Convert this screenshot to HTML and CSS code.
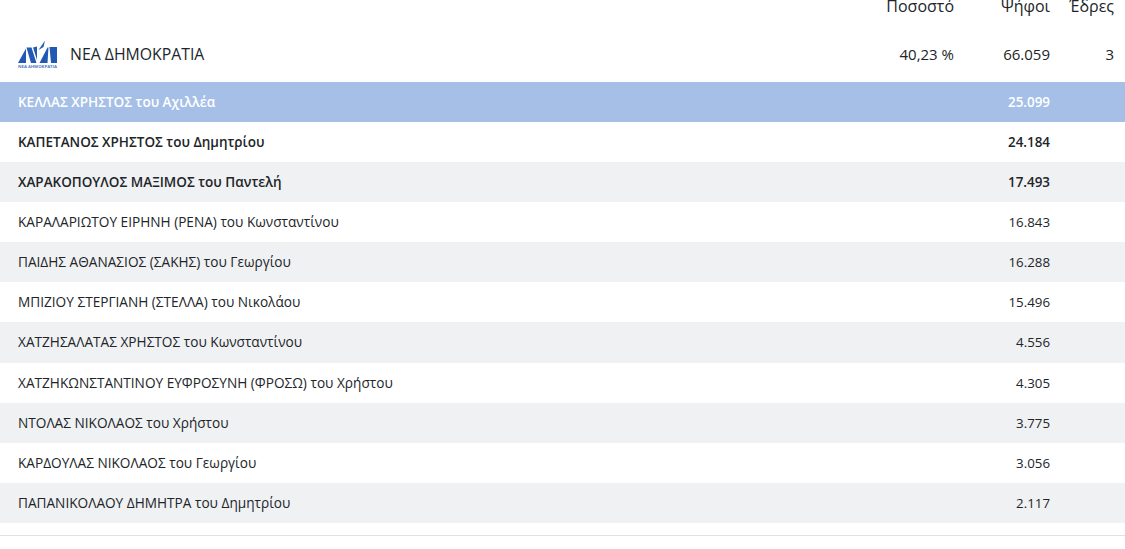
FILE: index.html
```html
<!DOCTYPE html>
<html lang="el">
<head>
<meta charset="utf-8">
<title>Αποτελέσματα</title>
<link rel="stylesheet" href="styles.css">
</head>
<body>
<main class="results">
  <div class="head">
    <span class="pct">Ποσοστό</span>
    <span class="votes">Ψήφοι</span>
    <span class="seats">Έδρες</span>
  </div>
  <div class="party">
    <svg class="logo" viewBox="0 0 40 28" aria-hidden="true">
      <g fill="#2259b5">
        <path d="M0 23 L8 8.500 L8 23 Z"/>
        <path d="M8.500 7.500 L13.500 7.500 L18.500 23 L13 23 Z"/>
        <path d="M15 7.500 L19 6.500 L19 20 Z"/>
        <path d="M20.500 10 L27 0.500 L25.500 7 Z"/>
        <path d="M21.500 23 L29.500 7.500 L30.500 7.500 L29.500 23 Z"/>
        <path d="M31.500 7 L39 7 L39 23 L33 23 Z"/>
      </g>
      <text class="logo-text" x="0" y="27.500" textLength="39" lengthAdjust="spacingAndGlyphs">ΝΕΑ ΔΗΜΟΚΡΑΤΙΑ</text>
    </svg>
    <span class="party-name">ΝΕΑ ΔΗΜΟΚΡΑΤΙΑ</span>
    <span class="pct">40,23 %</span>
    <span class="votes">66.059</span>
    <span class="seats">3</span>
  </div>
  <ul class="list">
    <li class="row elected first"><span class="name">ΚΕΛΛΑΣ ΧΡΗΣΤΟΣ του Αχιλλέα</span><span class="votes">25.099</span></li>
    <li class="row elected"><span class="name">ΚΑΠΕΤΑΝΟΣ ΧΡΗΣΤΟΣ του Δημητρίου</span><span class="votes">24.184</span></li>
    <li class="row elected"><span class="name">ΧΑΡΑΚΟΠΟΥΛΟΣ ΜΑΞΙΜΟΣ του Παντελή</span><span class="votes">17.493</span></li>
    <li class="row"><span class="name">ΚΑΡΑΛΑΡΙΩΤΟΥ ΕΙΡΗΝΗ (ΡΕΝΑ) του Κωνσταντίνου</span><span class="votes">16.843</span></li>
    <li class="row"><span class="name">ΠΑΙΔΗΣ ΑΘΑΝΑΣΙΟΣ (ΣΑΚΗΣ) του Γεωργίου</span><span class="votes">16.288</span></li>
    <li class="row"><span class="name">ΜΠΙΖΙΟΥ ΣΤΕΡΓΙΑΝΗ (ΣΤΕΛΛΑ) του Νικολάου</span><span class="votes">15.496</span></li>
    <li class="row"><span class="name">ΧΑΤΖΗΣΑΛΑΤΑΣ ΧΡΗΣΤΟΣ του Κωνσταντίνου</span><span class="votes">4.556</span></li>
    <li class="row"><span class="name">ΧΑΤΖΗΚΩΝΣΤΑΝΤΙΝΟΥ ΕΥΦΡΟΣΥΝΗ (ΦΡΟΣΩ) του Χρήστου</span><span class="votes">4.305</span></li>
    <li class="row"><span class="name">ΝΤΟΛΑΣ ΝΙΚΟΛΑΟΣ του Χρήστου</span><span class="votes">3.775</span></li>
    <li class="row"><span class="name">ΚΑΡΔΟΥΛΑΣ ΝΙΚΟΛΑΟΣ του Γεωργίου</span><span class="votes">3.056</span></li>
    <li class="row"><span class="name">ΠΑΠΑΝΙΚΟΛΑΟΥ ΔΗΜΗΤΡΑ του Δημητρίου</span><span class="votes">2.117</span></li>
  </ul>
  <div class="rule"></div>
</main>
</body>
</html>
```
FILE: styles.css
```css
* { box-sizing: border-box; }
html, body { margin: 0; padding: 0; background: #fff; overflow: hidden; }
body { font-family: "Open Sans", "Noto Sans", sans-serif; color: #212529; }
.results { width: 1125px; height: 549px; display: flex; flex-direction: column; }
.head {
  height: 22px; display: flex; justify-content: flex-end; align-items: flex-start;
  font-size: 16px; line-height: 12px; padding-right: 11px; flex-shrink: 0;
}
.head .pct { width: 80px; text-align: right; margin-right: 36px; }
.head .votes { width: 60px; text-align: right; margin-right: 17px; }
.head .seats { width: 47px; text-align: right; }
.party {
  height: 59.980px; display: flex; align-items: center; padding: 4px 11px 0 18px; font-size: 15px;
  flex-shrink: 0;
}
.logo { width: 40px; height: 28px; margin-right: 12px; flex-shrink: 0; }
.logo-text { font-size: 4px; font-weight: 700; fill: #4f7cc0; }
.party-name { flex: 1; font-size: 15.800px; }
.party .pct { width: 100px; text-align: right; margin-right: 36px; }
.party .votes { width: 60px; text-align: right; margin-right: 17px; }
.party .seats { width: 47px; text-align: right; }
.list { list-style: none; margin: 0; padding: 0; }
.row {
  height: 40.080px; display: flex; align-items: center; justify-content: space-between;
  padding: 0 75px 0 18px; font-size: 13.300px; line-height: 20px;
}
.row .name { font-size: 13.650px; }
.row:nth-child(odd) { background: #f0f1f3; }
.row.elected { font-weight: 600; font-size: 13.400px; }
.row.elected .name { font-size: 13.500px; }
.row.first { background: #a5bfe7; color: #fff; }
.rule { height: 1px; margin-top: 12px; background: #dee2e6; }
```
